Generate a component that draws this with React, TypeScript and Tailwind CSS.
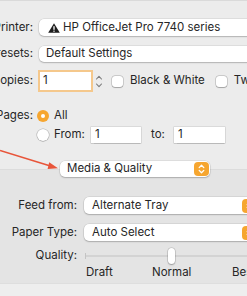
const popup =
  "h-[17px] flex items-center bg-white rounded-[5px] shadow-[0_0_0_0.5px_rgba(0,0,0,0.12),0_1px_1.5px_rgba(0,0,0,0.2)]";

const Label = ({ text, w }: { text: string; w: string }) => (
  <div className={`${w} shrink-0 flex justify-end whitespace-nowrap`}>{text}</div>
);

const Stepper = () => (
  <div className="w-[15px] h-[14px] rounded-[4px] bg-[#f6a630] flex items-center justify-center shrink-0">
    <svg width="7" height="10" viewBox="0 0 7 10" fill="none" stroke="white" strokeWidth="1.3" strokeLinecap="round" strokeLinejoin="round">
      <path d="M1.2 3.6 3.5 1.3 5.8 3.6" />
      <path d="M1.2 6.4 3.5 8.7 5.8 6.4" />
    </svg>
  </div>
);

const Checkbox = () => (
  <div className="w-[11px] h-[11px] rounded-[3px] bg-white shrink-0 shadow-[0_0_0_0.5px_rgba(0,0,0,0.25),0_0.5px_1px_rgba(0,0,0,0.2)]" />
);

const Field = ({ w }: { w: string }) => (
  <div className={`${w} h-[16px] bg-white flex items-center pl-[4px] shadow-[0_0_0_0.5px_rgba(0,0,0,0.15),0_0.5px_1px_rgba(0,0,0,0.15)]`}>
    1
  </div>
);

export default function App() {
  return (
    <div className="w-[247px] h-[296px] overflow-hidden relative bg-[#ececec] border-t border-[#dadada] text-[11.5px] text-[#262626] font-['Inter','Liberation_Sans',sans-serif] leading-none">
      {/* Printer */}
      <div className="mt-[18px] flex items-center">
        <Label text="Printer:" w="w-[33px]" />
        <div className={`${popup} ml-[6px] w-[240px] shrink-0 pl-[9px]`}>
          <svg width="12" height="10" viewBox="0 0 12 10" className="shrink-0">
            <path d="M6 0.3 11.8 9.8H0.2Z" fill="#1e1e1e" />
            <rect x="5.35" y="3.2" width="1.3" height="3.6" fill="white" />
            <rect x="5.35" y="7.6" width="1.3" height="1.2" fill="white" />
          </svg>
          <span className="ml-[3px]">HP OfficeJet Pro 7740 series</span>
        </div>
      </div>

      {/* Presets */}
      <div className="mt-[10px] flex items-center">
        <Label text="Presets:" w="w-[33px]" />
        <div className={`${popup} !h-[16px] ml-[6px] w-[240px] shrink-0 pl-[7px]`}>Default Settings</div>
      </div>

      {/* Copies */}
      <div className="mt-[10px] flex items-center h-[18px]">
        <Label text="Copies:" w="w-[33px]" />
        <div className="ml-[7px] w-[51px] h-[18px] bg-white flex items-center pl-[3px] shrink-0 shadow-[0_0_0_2px_#f5c88c]">
          1
        </div>
        <svg width="8" height="15" viewBox="0 0 8 15" className="ml-[4px] shrink-0" fill="none" stroke="#7a7a7a" strokeWidth="1.1" strokeLinecap="round" strokeLinejoin="round">
          <path d="M1.5 5 4 2.3 6.5 5" />
          <path d="M1.5 10 4 12.7 6.5 10" />
        </svg>
        <div className="ml-[9px]">
          <Checkbox />
        </div>
        <span className="ml-[7px] whitespace-nowrap">Black &amp; White</span>
        <div className="ml-[11px]">
          <Checkbox />
        </div>
        <span className="ml-[7px] whitespace-nowrap">Two-Sided</span>
      </div>

      {/* Pages */}
      <div className="mt-[20px] flex items-center h-[12px]">
        <Label text="Pages:" w="w-[33px]" />
        <div className="ml-[4px] w-[12px] h-[12px] rounded-full bg-[#f6a630] flex items-center justify-center shrink-0">
          <div className="w-[4px] h-[4px] rounded-full bg-white" />
        </div>
        <span className="ml-[5px]">All</span>
      </div>
      <div className="mt-[5px] flex items-center h-[16px]">
        <div className="w-[37px] shrink-0" />
        <div className="w-[12px] h-[12px] rounded-full bg-white shrink-0 shadow-[0_0_0_0.5px_rgba(0,0,0,0.25),0_0.5px_1px_rgba(0,0,0,0.2)]" />
        <span className="ml-[5px] w-[37px] shrink-0">From:</span>
        <Field w="w-[50px]" />
        <span className="ml-[10px] w-[23px] shrink-0">to:</span>
        <Field w="w-[51px]" />
      </div>

      {/* Section popup */}
      <div className="relative z-10 mt-[18px] ml-[60px]">
        <div className={`${popup} !h-[16px] w-[150px] pl-[7px] pr-[1px] justify-between`}>
          <span>Media &amp; Quality</span>
          <Stepper />
        </div>
      </div>

      {/* Box */}
      <div className="-mt-[8px] h-[114px] bg-[#e4e4e4] border-t border-[#dcdcdc] pt-[27px]">
        <div className="flex items-center">
          <Label text="Feed from:" w="w-[77px]" />
          <div className={`${popup} ml-[7px] w-[174px] shrink-0 pl-[8px] pr-[1px] justify-between`}>
            <span>Alternate Tray</span>
            <Stepper />
          </div>
        </div>
        <div className="mt-[10px] flex items-center">
          <Label text="Paper Type:" w="w-[77px]" />
          <div className={`${popup} ml-[7px] w-[174px] shrink-0 pl-[8px] pr-[1px] justify-between`}>
            <span>Auto Select</span>
            <Stepper />
          </div>
        </div>
        <div className="mt-[7px] flex items-center h-[16px]">
          <Label text="Quality:" w="w-[77px]" />
          <div className="ml-[8px] relative h-[16px] w-[180px] shrink-0">
            <div className="absolute left-0 right-0 top-[7px] h-[1.5px] bg-[#d3d3d3]" />
            <div className="absolute left-0 top-[5px] w-[1px] h-[6px] bg-[#c4c4c4]" />
            <div className="absolute left-[83px] top-0 w-[7px] h-[16px] rounded-[3.5px] bg-white shadow-[0_0_0_0.5px_rgba(0,0,0,0.2),0_1px_1.5px_rgba(0,0,0,0.25)]" />
          </div>
        </div>
        <div className="mt-[3px] flex pl-[86px] whitespace-nowrap">
          <span className="w-[66px] shrink-0">Draft</span>
          <span className="w-[80px] shrink-0">Normal</span>
          <span>Best</span>
        </div>
      </div>
      <div className="h-[20px] bg-[#eeeeee] border-t border-[#dedede]" />

      {/* annotation arrow */}
      <svg className="absolute left-0 top-[140px]" width="64" height="34" viewBox="0 0 64 34" fill="none">
        <path d="M0 9.5 52 25.6" stroke="#e8553a" strokeWidth="1.6" />
        <path d="M58 27.2 49.2 21.3 47.6 27.9Z" fill="#e8553a" />
      </svg>
    </div>
  );
}
